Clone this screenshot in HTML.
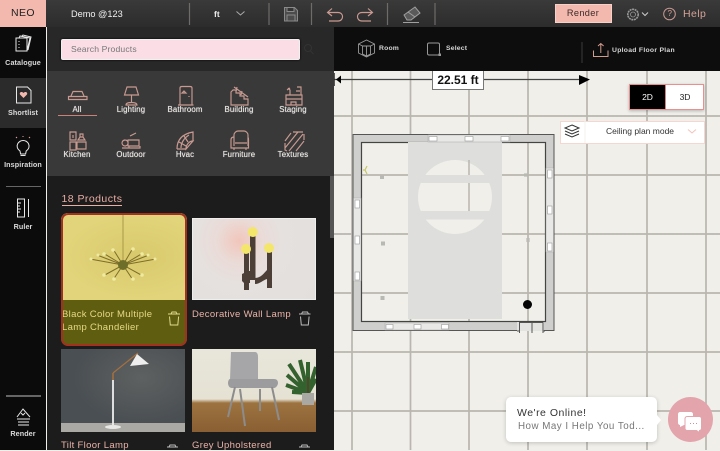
<!DOCTYPE html>
<html><head><meta charset="utf-8">
<style>
html,body{margin:0;padding:0;width:720px;height:450px;overflow:hidden;background:#f0efea;font-family:"Liberation Sans",sans-serif}
.a{position:absolute}
.t{position:absolute;white-space:nowrap;line-height:1}
.c{transform:translateX(-50%);text-align:center}
svg{position:absolute;overflow:visible}
.p{fill:none;stroke:#c99a92;stroke-width:1.150}
.w{fill:none;stroke:#e8e8e8;stroke-width:1}
.cat{font-size:7.800px;color:#e8e4e2;letter-spacing:.15px;text-shadow:0 0 .6px #e8e4e2}
.rail{font-size:7.200px;color:#eee;letter-spacing:.1px;font-weight:bold;opacity:.9}
.name{font-size:9.500px;color:#e9b3a9;letter-spacing:.32px}
.tool{font-size:6.800px;color:#d6d6d6;font-weight:bold;letter-spacing:.2px}
</style></head><body>
<div class="a" style="left:0;top:0;width:720px;height:450px;background:#f0efea"></div>
<!-- grid -->
<svg style="left:0;top:0" width="720" height="450"><g stroke="#b8b6ae" stroke-width="1.700">
<path d="M352 40V450M410.500 40V450M469 40V450M528 40V450M587 40V450M647 40V450M706 40V450M334 116H720M334 175H720M334 234H720M334 293H720M334 352H720M334 411H720"/></g></svg>
<!-- dimension -->
<svg style="left:0;top:0" width="720" height="450"><path d="M334 79.500H582" stroke="#444" stroke-width="1.200"/><path d="M579 75L590 79.500L579 85Z" fill="#000"/><path d="M334 73V86" stroke="#222" stroke-width="1.500"/><path d="M336 79.500l5-4v8z" fill="#000"/></svg>
<div class="a" style="left:432px;top:71px;width:52px;height:19px;background:#fff;border:1.500px solid #777;border-top:0;box-sizing:border-box"></div>
<div class="t c" style="left:458px;top:74px;font-size:12px;font-weight:bold;color:#111">22.51 ft</div>
<!-- room -->
<svg style="left:0;top:0" width="720" height="450">
<path fill-rule="evenodd" d="M353 134.500H554V330.500H353ZM361.500 142.500V321.500H545.500V142.500Z" fill="#cfcfcd" stroke="#555" stroke-width="1"/>
<rect x="361.500" y="142.500" width="184" height="179" fill="none" stroke="#444" stroke-width="1.200"/>
<rect x="408" y="142" width="94" height="177" fill="#dededc"/>
<circle cx="455" cy="197" r="37" fill="#f0efea"/>
<rect x="416" y="175" width="80" height="8" fill="#dededc"/><rect x="416" y="211" width="80" height="8.500" fill="#dededc"/>
<path d="M469 160V175M469 183V211" stroke="#b8b6ae" stroke-width="1.500"/>
<!-- windows -->
<g fill="#e8e8e6" stroke="#aaa" stroke-width=".5">
<rect x="428" y="135" width="82" height="7"/><rect x="546" y="168" width="7.500" height="84"/><rect x="353.500" y="198" width="7.500" height="83"/><rect x="385" y="323" width="64" height="7"/></g>
<g fill="#fff" stroke="#999" stroke-width=".6">
<rect x="429" y="136.500" width="8" height="4.500"/><rect x="465" y="136.500" width="8" height="4.500"/><rect x="501" y="136.500" width="8" height="4.500"/>
<rect x="547.500" y="170" width="4.500" height="8"/><rect x="547.500" y="206" width="4.500" height="8"/><rect x="547.500" y="243" width="4.500" height="8"/>
<rect x="355" y="200" width="4.500" height="8"/><rect x="355" y="236" width="4.500" height="8"/><rect x="355" y="272" width="4.500" height="8"/>
<rect x="386" y="324.500" width="7" height="4.500"/><rect x="414" y="324.500" width="7" height="4.500"/><rect x="441.500" y="324.500" width="7" height="4.500"/></g>
<!-- door -->
<rect x="517" y="322" width="27" height="9" fill="#e3e3e1"/>
<path d="M519.500 333V322.500H532V333M532 322.500H543V333M517 331H520M543 331H545" fill="none" stroke="#555" stroke-width="1"/>
<circle cx="527.500" cy="304.500" r="4.500" fill="#050505"/>
<g fill="#b8b8b4"><rect x="380" y="175" width="4" height="4"/><rect x="381" y="241.500" width="4" height="4"/><rect x="380.500" y="296" width="4" height="4"/><rect x="524" y="173" width="4" height="4" opacity=".6"/><rect x="526" y="238" width="4" height="4" opacity=".6"/></g>
<path d="M367 166l-2 4 2 4M365 170h-2" stroke="#c6c866" stroke-width="1.200" fill="none"/>
</svg>
<!-- tool bar -->
<div class="a" style="left:0;top:0;width:720px;height:27px;background:linear-gradient(#3a3a3a,#2c2c2c)"></div>
<div class="a" style="left:334px;top:27px;width:386px;height:44px;background:#0d0d0d"></div>
<div class="a" style="left:0;top:0;width:46px;height:27px;background:#f3b9ae"></div>
<div class="t c" style="left:23px;top:8px;font-size:10.500px;color:#222;letter-spacing:.4px">NEO</div>
<div class="t" style="left:71px;top:9.500px;font-size:9.200px;color:#f0f0f0">Demo @123</div>
<div class="t" style="left:214px;top:9.500px;font-size:8.500px;color:#eee;font-weight:bold">ft</div>
<svg style="left:0;top:0" width="720" height="27">
<g stroke="#6f6b69" stroke-width="1.200"><path d="M189.500 3V25M269 3V25M311.500 3V25M387.500 3V25M435 3V25"/></g>
<path d="M236.500 11.500l4 3.500 4-3.500" fill="none" stroke="#aaa" stroke-width="1"/>
<path d="M284.500 7.500h10l3 3v10.500h-13Z M287 7.500v4h7v-4 M287 21v-6h8v6" fill="#4c4c4c" stroke="#8a8a8a" stroke-width="1"/>
<path d="M332 8.500l-4.500 4 4.500 3.500M327.500 12.500H338c3 0 4.500 2 4.500 4.200s-1.500 4.300-4.500 4.300h-9" class="p" stroke-width="1.100"/>
<path d="M368 8.500l4.500 4-4.500 3.500M372.500 12.500H362c-3 0-4.500 2-4.500 4.200s1.500 4.300 4.500 4.300h9" class="p" stroke-width="1.100"/>
<path d="M404 15l11-8 5 6-9 7h-4Z M408 12l7 5M403 22.500h16" fill="#5a5a5a" stroke="#a0a0a0" stroke-width="1"/>
<circle cx="633" cy="14.500" r="5.200" fill="none" stroke="#999" stroke-width="1.600" stroke-dasharray="2 .6"/><circle cx="633" cy="14.500" r="2.500" fill="none" stroke="#999" stroke-width=".8"/>
<path d="M642 12.500l3 3 3-3" fill="none" stroke="#ccc" stroke-width="1"/>
<circle cx="669.500" cy="14" r="5.800" fill="none" stroke="#c99a92" stroke-width="1"/>
</svg>
<div class="t" style="left:667.500px;top:10px;font-size:8px;color:#d6a298">?</div>
<div class="a" style="left:555px;top:4px;width:57px;height:19px;background:#f3b9ae;border:.5px solid #f7d0c8;box-sizing:border-box"></div>
<div class="t c" style="left:583px;top:9px;font-size:9.200px;color:#3a2a28;letter-spacing:.35px">Render</div>
<div class="t" style="left:683px;top:8.500px;font-size:10.500px;color:#d6a298;letter-spacing:.4px">Help</div>
<!-- second bar -->
<svg style="left:0;top:0" width="720" height="71">
<g fill="none" stroke="#999" stroke-width=".9"><path d="M358.500 44l8-4 8 4v9l-8 4-8-4ZM358.500 44l4 2v8l4 2 4-2v-8l4-2M362.500 46h8M366.500 46v10"/></g>
<rect x="427.500" y="43" width="12" height="12" rx="1.500" fill="none" stroke="#999" stroke-width="1"/><rect x="438.500" y="53.500" width="2.500" height="2.500" fill="#999"/>
<path d="M582 42V63" stroke="#3a3a3a" stroke-width="1"/>
<path d="M593.500 50.500v6h14.500v-6M600.800 53V43.500M598 46l2.800-2.500 2.800 2.500" fill="none" stroke="#d49c8e" stroke-width="1"/>
</svg>
<div class="t tool" style="left:379px;top:46px">Room</div>
<div class="t tool" style="left:446px;top:46px">Select</div>
<div class="t tool" style="left:612px;top:47.500px;letter-spacing:.28px">Upload Floor Plan</div>
<!-- 2D/3D -->
<div class="a" style="left:629px;top:84px;width:37px;height:26px;background:#000;border:1px solid #e88f90;box-sizing:border-box;box-shadow:0 1px 3px rgba(0,0,0,.25)"></div>
<div class="a" style="left:666px;top:84px;width:38px;height:26px;background:#fff;border:1px solid #e88f90;border-left:0;box-sizing:border-box;box-shadow:0 1px 3px rgba(0,0,0,.25)"></div>
<div class="t c" style="left:647.500px;top:93px;font-size:8.500px;color:#fff">2D</div>
<div class="t c" style="left:685px;top:93px;font-size:8.500px;color:#222">3D</div>
<div class="a" style="left:560px;top:120.500px;width:145px;height:23px;background:#fff;border:.7px solid #f5d6d0;box-sizing:border-box"></div>
<div class="t c" style="left:640px;top:127px;font-size:8.500px;color:#333">Ceiling plan mode</div>
<svg style="left:0;top:0" width="720" height="150"><path d="M585 121v22" stroke="#f4f1ee"/><path d="M572 125l7 3-7 3-7-3Z M565 131l7 3 7-3M565 134l7 3 7-3" fill="none" stroke="#333" stroke-width="1"/><path d="M688 129.500l4 3.500 4-3.500" fill="none" stroke="#f3c3ba" stroke-width="1"/></svg>
<!-- left rail -->
<div class="a" style="left:0;top:27px;width:46px;height:423px;background:#0b0b0b"></div>
<div class="a" style="left:0;top:78px;width:46px;height:50px;background:#2b2b2b"></div>
<div class="a" style="left:6px;top:185.500px;width:35px;height:1px;background:#666"></div>
<div class="a" style="left:6px;top:395px;width:35px;height:1.500px;background:#666"></div>
<svg style="left:0;top:0" width="46" height="450">
<path d="M16 38h11v13H16Z" class="w"/><path d="M19 38l1-2 10 2-3 13M22 36l1-1 8 2-3 13" class="w" stroke-width=".8"/><path d="M19 41v1M19 44v1M19 47v1" stroke="#ddd" stroke-width="1"/>
<path d="M16.500 87h11l3.500 3.500V103H16.500Z" class="w"/><path d="M23.500 98l-3.500-3.500c-1-2 1.500-3.500 3.500-1.500 2-2 4.500-.5 3.500 1.500Z" fill="#f3b9ae"/>
<path d="M20 151c-3-2-3.500-5-2.200-7.500 2.700-4 8-4 10.600 0 1.300 2.500.8 5.500-2.200 7.500l-.6 3h-5Z" class="w"/><path d="M20.500 155.500h5" stroke="#e8e8e8"/><path d="M16 137l1 1M23 136v1M30 137l-1 1" stroke="#e9a89c" stroke-width="1"/>
<path d="M17.500 199h7v18h-7ZM28.500 199v18M18 203h3M18 206h2M18 209h3M18 212h2" class="w"/>
<path d="M17 417l6-8 7 8M21 413l2 2 2-2M17 419h13M18 422h11M18 425h11" class="w"/>
</svg>
<div class="t c rail" style="left:23px;top:59px">Catalogue</div>
<div class="t c rail" style="left:23px;top:109px">Shortlist</div>
<div class="t c rail" style="left:23px;top:161px">Inspiration</div>
<div class="t c rail" style="left:23px;top:223px">Ruler</div>
<div class="t c rail" style="left:23px;top:430px">Render</div>
<!-- panel -->
<div class="a" style="left:47px;top:27px;width:287px;height:423px;background:#1d1c1c"></div>
<div class="a" style="left:47px;top:27px;width:287px;height:44px;background:#282828"></div>
<div class="a" style="left:47px;top:71px;width:287px;height:105px;background:#393939"></div>
<div class="a" style="left:61px;top:39px;width:239px;height:21px;background:#fbdde6;border:1px solid #f0f0f0;border-radius:2px;box-sizing:border-box;box-shadow:0 0 2px #000"></div>
<div class="t" style="left:71px;top:45px;font-size:8.600px;color:#777;letter-spacing:.15px">Search Products</div>
<svg style="left:0;top:0" width="334" height="175">
<circle cx="308" cy="48" r="3.500" fill="none" stroke="#333"/><path d="M310.500 51l3 3" stroke="#333"/>
<path d="M58 115.500h39" stroke="#c9827a" stroke-width="1"/>
<g class="p">
<path d="M68.500 99.500h18.500v-3h-18.500ZM71 96l2-4.500h9l2 4.500"/>
<path d="M127 87h9l2.500 8h-14ZM131.500 95v8M126 105c0-2 3-2.500 5.500-2.500s5.500.5 5.500 2.500Z"/>
<path d="M180 105V88c0-1 1-1.500 2-1.500h8c1 0 2 .5 2 1.500v17M178 105h15.500M189 96v1M184 91l2 2h-4Z"/>
<path d="M231 92v13h17v-6h-4v-3h-4v-3h-4v-3h-3ZM234 87l14 10M237 87l-1 5M242 91l-1 4"/>
<path d="M286 95h16v10h-16ZM286 99h16M291 105v-3h5v3M288 88l2 2v5M290 88l-3 2M297 87h4v8M296 91h4"/>
<path d="M70 132h6v8h-6ZM70 142h6v8h-6ZM73 135v3M80 134h3v3h-3ZM78 140l2-3h3l2 3ZM77 142h9v7h-9Z"/>
<path d="M125 140a3 3 0 1 0 .1 0M128 140h11v6h-11ZM130 136l6-3M129 146v2h11v-2M122 148h18"/>
<path d="M177 149c0-9 5-15 16-17v9M193 141c-4 0-7 4-7 8ZM177 149h9M181 148c0-5 3-10 8-13M179 142l7 4M184 136l4 6" stroke-width="1.200"/>
<path d="M234 146v-11c0-2 2-4 4-4h6c2 0 4 2 4 4v11M234 137c-3 0-3 2-3 3v8h17.500v-8c0-1 0-3-1-3M235 143h12M234 148v2M246 148v2"/>
<path d="M285 141l6-8M285 148l13-16M289 151l14-17M296 151l8-10M293 132h10M304 134v6M285 143v7l2 1"/>
</g></svg>
<div class="t c cat" style="left:77px;top:105.500px">All</div>
<div class="t c cat" style="left:131px;top:105.500px">Lighting</div>
<div class="t c cat" style="left:185px;top:105.500px">Bathroom</div>
<div class="t c cat" style="left:239px;top:105.500px">Building</div>
<div class="t c cat" style="left:293px;top:105.500px">Staging</div>
<div class="t c cat" style="left:77px;top:150.500px">Kitchen</div>
<div class="t c cat" style="left:131px;top:150.500px">Outdoor</div>
<div class="t c cat" style="left:185px;top:150.500px">Hvac</div>
<div class="t c cat" style="left:239px;top:150.500px">Furniture</div>
<div class="t c cat" style="left:293px;top:150.500px">Textures</div>
<div class="t" style="left:61.500px;top:194px;font-size:10.500px;color:#e9aea4;letter-spacing:.45px;height:10.500px;border-bottom:1px solid #e9aea4">18 Products</div>
<div class="a" style="left:330px;top:176px;width:4px;height:274px;background:#1d1c1c"></div>
<div class="a" style="left:330px;top:176px;width:4px;height:62px;background:#555"></div>
<!-- Card 1 -->
<div class="a" style="left:61px;top:213px;width:126px;height:132.500px;border-radius:7px;background:#5f5e10;overflow:hidden">
<div class="a" style="left:0;top:0;width:126px;height:87px;background:radial-gradient(ellipse at 60% 50%,#d8c96c,#e2d47a 70%)"></div>
<svg style="left:0;top:0" width="126" height="87" stroke="#7d6e2a" stroke-width="1" fill="none">
<path d="M62 0V52" stroke="#a89a48"/><path d="M62 52L29 46M62 52L95 46M62 52L42 40M62 52L82 40M62 52L42 63M62 52L82 63M62 52L52 36M62 52L72 35M62 52L52 67M62 52L72 67M62 52L36 42M62 52L88 42"/>
<circle cx="62" cy="52" r="5" fill="#6d6f28" stroke="none"/>
<g fill="#f0eaa0" stroke="none"><circle cx="43" cy="41" r="1.800"/><circle cx="81" cy="41" r="1.800"/><circle cx="52" cy="37" r="1.800"/><circle cx="72" cy="36" r="1.800"/><circle cx="43" cy="62" r="1.800"/><circle cx="81" cy="62" r="1.800"/><circle cx="53" cy="66" r="1.800"/><circle cx="72" cy="66" r="1.800"/><circle cx="30" cy="46" r="1.500"/><circle cx="94" cy="46" r="1.500"/><circle cx="37" cy="42" r="1.500"/><circle cx="87" cy="42" r="1.500"/></g></svg>
<div class="t name" style="left:1px;top:97px;color:#e6d987">Black Color Multiple</div>
<div class="t name" style="left:1px;top:110px;color:#e6d987">Lamp Chandelier</div>
<svg style="left:0;top:0" width="126" height="133"><path d="M107 101h12M110 101l1-2h4l1 2M108.500 103.500l.8 8.500h7.500l.8-8.500" fill="none" stroke="#e0d88a" stroke-width="1"/></svg>
<div class="a" style="left:0;top:0;width:126px;height:132.500px;box-sizing:border-box;border:2px solid #a2311f;border-radius:7px"></div>
</div>
<!-- Card 2 -->
<div class="a" style="left:192px;top:218px;width:124px;height:82px;background:radial-gradient(circle at 46px 22px,#f1c6bb 0,#eadbd7 22px,#e5e1df 45px,#e3dfdd);overflow:hidden;box-sizing:border-box;border:1px solid #eee">
<svg style="left:-1px;top:-1px" width="124" height="82">
<g fill="#4b3f38"><rect x="52" y="35" width="5" height="37"/><rect x="58" y="18" width="5.500" height="44"/><rect x="75" y="34" width="5" height="36"/><path d="M50 56l6-3h2v12h-6l-2-2ZM63 60c6 0 9-5 12-8v9c-4 1-7 5-12 5Z"/></g>
<g fill="#f3e66a"><circle cx="54" cy="31" r="5"/><circle cx="60.700" cy="14" r="5"/><circle cx="77" cy="30" r="5"/></g></svg>
</div>
<div class="t name" style="left:192px;top:310px">Decorative Wall Lamp</div>
<svg style="left:0;top:0" width="334" height="340"><path d="M299 314h11.500M301.500 314l1-2h5l1 2M300.500 316.500l.8 8.500h7l.8-8.500" fill="none" stroke="#bbb" stroke-width="1"/></svg>
<!-- Card 3 -->
<div class="a" style="left:61px;top:349px;width:124px;height:82.500px;background:radial-gradient(ellipse at 65% 35%,#5e6161,#4a4f53 60%);overflow:hidden">
<div class="a" style="left:0;top:74px;width:124px;height:8.500px;background:#aaa9a3"></div>
<svg style="left:0;top:0" width="124" height="82"><path d="M52 24L77 4" stroke="#a7703c" stroke-width="1.200"/><path d="M52 24v7" stroke="#a7703c" stroke-width="1.500"/><path d="M52 31V76" stroke="#eee" stroke-width="1.800"/><path d="M76 5l12 10-19 2Z" fill="#eee"/><ellipse cx="52" cy="78" rx="8" ry="2" fill="#e8e8e6"/></svg>
</div>
<div class="t name" style="left:61px;top:441px">Tilt Floor Lamp</div>
<!-- Card 4 -->
<div class="a" style="left:192px;top:349px;width:124px;height:82.500px;background:linear-gradient(#e8e6da 0,#e5e2d4 50px,#9c7340 54px,#8a5f33 100%);overflow:hidden">
<svg style="left:0;top:0" width="124" height="82"><path d="M39 3h24c2 0 3 2 3 5v23H38Z" fill="#a6a6a8"/><path d="M38 30h44c3 0 4 2 4 4s-2 5-4 5H40c-3 0-4-3-4-5s1-4 2-4Z" fill="#9c9c9e"/><path d="M43 38l-7 30M48 40l5 37M80 38l7 33M68 40v22" stroke="#8d8c8c" stroke-width="2"/><path d="M116 44L95 26M116 44L97 15M116 44L108 11M116 44V13M116 44L124 18M116 44L124 30M116 44L94 36M116 44L100 43" stroke="#34622f" stroke-width="4"/><path d="M116 28v18" stroke="#5a3d2a" stroke-width="1.500"/><rect x="110" y="44" width="12" height="12" fill="#a9a8a2"/></svg>
</div>
<div class="t name" style="left:192px;top:441px">Grey Upholstered</div>
<svg style="left:0;top:0" width="334" height="450"><path d="M167 447h11M169 447l1-2h5l1 2M299 447h11M301 447l1-2h5l1 2" fill="none" stroke="#bbb" stroke-width="1"/></svg>
<!-- chat -->
<div class="a" style="left:506px;top:397px;width:151px;height:45px;background:#fff;border-radius:5px;box-shadow:0 1px 4px rgba(0,0,0,.2)"></div>
<svg style="left:0;top:0" width="720" height="450"><path d="M657 415l4 5-4 5Z" fill="#fff"/></svg>
<div class="t" style="left:517px;top:407.500px;font-size:10.500px;color:#333;letter-spacing:.5px">We're Online!</div>
<div class="t" style="left:518px;top:422px;font-size:9.800px;color:#777;letter-spacing:.48px">How May I Help You Tod...</div>
<div class="a" style="left:668px;top:397px;width:45px;height:45px;border-radius:50%;background:#e3a4ac"></div>
<svg style="left:0;top:0" width="720" height="450"><path d="M680 412h11c1 0 2 1 2 2v9c0 1-1 2-2 2h-7l-4 2v-2c-1 0-2-1-2-2v-9c0-1 1-2 2-2Z" fill="#fff"/><path d="M687 416.500h12.500c1 0 2 1 2 2v10c0 1-1 2-2 2v2l-3-2h-9.500c-1 0-2-1-2-2v-10c0-1 1-2 2-2Z" fill="#fff" stroke="#e3a4ac" stroke-width="1"/><path d="M690 423.500h1M693 423.500h1M696 423.500h1" stroke="#d48e98" stroke-width="1"/></svg>
</body></html>
